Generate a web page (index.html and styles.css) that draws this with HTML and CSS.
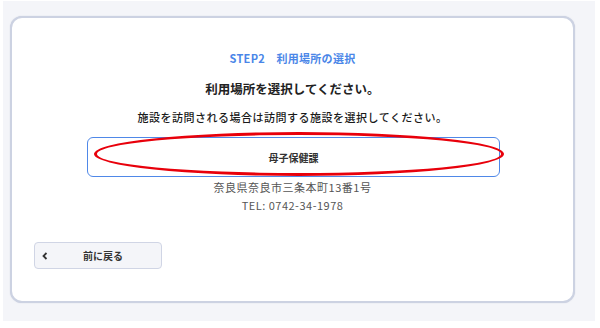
FILE: index.html
```html
<!DOCTYPE html>
<html lang="ja">
<head>
  <meta charset="UTF-8" />
  <title>STEP2 利用場所の選択</title>
  <meta name="viewport" content="width=device-width, initial-scale=1.0" />
  <link rel="stylesheet" href="styles.css">
</head>
<body>
  <div class="screen">
    <div class="card">
      <p class="step">STEP2　利用場所の選択</p>
      <h1 class="title">利用場所を選択してください。</h1>
      <p class="note">施設を訪問される場合は訪問する施設を選択してください。</p>

      <div class="facility">
        <button class="facility-button">母子保健課</button>
        <!-- Red mark drawn over the button -->
        <div class="mark"></div>
      </div>
      <p class="address">奈良県奈良市三条本町13番1号</p>
      <p class="address">TEL: 0742-34-1978</p>

      <div class="actions">
        <button class="back-button">
          <svg class="chevron" width="6" height="8" viewBox="0 0 6 8">
            <path d="M4.5 1 L1.5 4 L4.5 7" fill="none" stroke="#333" stroke-width="1.8" />
          </svg>
          <span>前に戻る</span>
        </button>
      </div>
    </div>
  </div>
</body>
</html>
```

FILE: styles.css
```css
* {
  box-sizing: border-box;
}

body {
  margin: 0;
  background: #fff;
  font-family: 'Noto Sans CJK JP', 'Noto Sans', sans-serif;
  color: #333;
}

.screen {
  width: 592px;
  height: 320px;
  margin: 1px 0 0 3px;
  padding: 15px 0 0 7px;
  background: #f4f5f9;
}

.card {
  width: 565px;
  height: 287px;
  padding: 33px 0 0;
  background: #fff;
  border: 2px solid #ccd2e2;
  border-radius: 12px;
  box-shadow: 0 0 1px rgba(150, 160, 190, 0.5);
  display: flex;
  flex-direction: column;
  align-items: center;
}

.step {
  margin: 0;
  font-size: 11px;
  line-height: 14px;
  font-weight: 700;
  color: #4a86e8;
  letter-spacing: 0.3px;
}

.title {
  margin: 15px 0 0;
  font-size: 12.5px;
  line-height: 18px;
  font-weight: 700;
  color: #222;
}

.note {
  margin: 11px 0 0;
  font-size: 11px;
  line-height: 16px;
  font-weight: 500;
  color: #1a1a1a;
  letter-spacing: 0.5px;
}

.facility {
  position: relative;
  margin: 12px 0 0 2px;
}

.facility-button {
  display: block;
  width: 413px;
  height: 40px;
  background: #fff;
  border: 1.5px solid #4f88e8;
  border-radius: 6px;
  font-family: inherit;
  font-size: 10px;
  font-weight: 700;
  color: #333;
}

.mark {
  position: absolute;
  left: 7px;
  top: -5px;
  width: 410px;
  height: 44px;
  border: 3px solid #e8000b;
  border-radius: 50%;
  pointer-events: none;
}

.address {
  margin: 2px 0 0;
  font-size: 11px;
  line-height: 16px;
  color: #555;
  letter-spacing: 0.5px;
}

.actions {
  align-self: stretch;
  margin-top: 29px;
  padding-left: 22px;
}

.back-button {
  display: flex;
  align-items: center;
  width: 128px;
  height: 27px;
  padding: 0 0 0 7px;
  background: #f4f5f9;
  border: 1px solid #d0d5e5;
  border-radius: 4px;
  font-family: inherit;
  font-size: 10px;
  font-weight: 700;
  color: #333;
}

.back-button span {
  margin-left: 35px;
}
```
